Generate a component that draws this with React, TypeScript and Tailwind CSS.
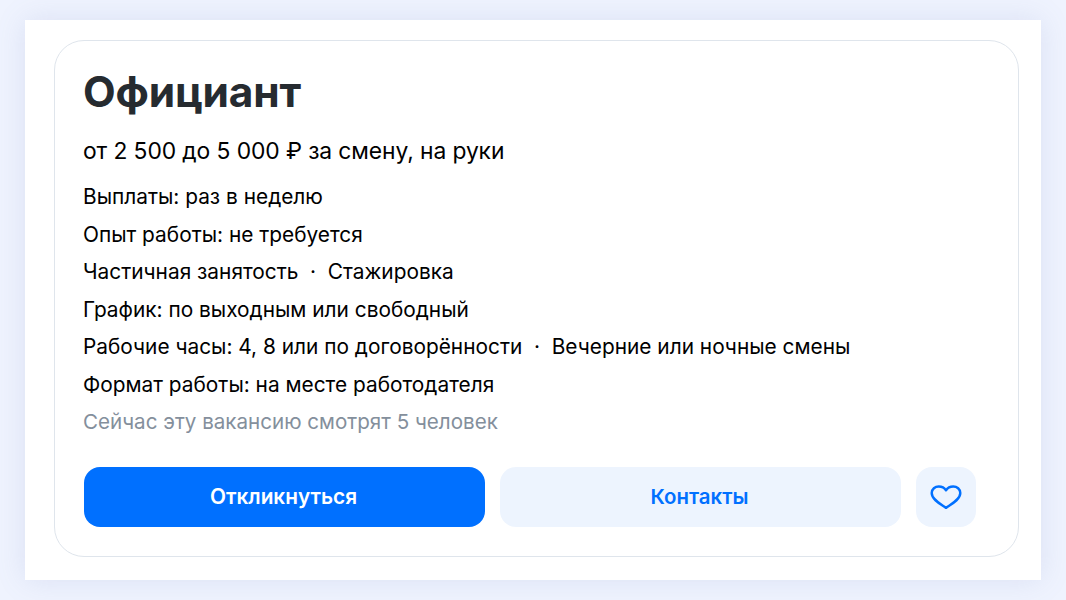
const ROWS = [
  "Выплаты: раз в неделю",
  "Опыт работы: не требуется",
  "Частичная занятость  ·  Стажировка",
  "График: по выходным или свободный",
  "Рабочие часы: 4, 8 или по договорённости  ·  Вечерние или ночные смены",
  "Формат работы: на месте работодателя",
];

function Heart() {
  return (
    <svg width="32" height="24" viewBox="0 0 30 22.5" fill="none" stroke="#0070ff" strokeWidth="2.3" strokeLinejoin="round">
      <path d="M15 21.5 C11 18.5 1.6 14 1.6 7.6 C1.6 3.8 4.8 1.4 8.2 1.4 C11 1.4 13.6 2.8 15 5 C16.4 2.8 19 1.4 21.8 1.4 C25.2 1.4 28.4 3.8 28.4 7.6 C28.4 14 19 18.5 15 21.5 Z" />
    </svg>
  );
}

export default function App() {
  return (
    <div className="h-[600px] w-[1066px] overflow-hidden bg-[#eff3fe] pl-[25px] pt-[20px] font-['Inter',sans-serif]">
      <div className="h-[560px] w-[1016px] bg-white pl-[29px] pt-[20px] shadow-[0_0_28px_rgba(110,130,185,0.16)]">
        <div className="h-[517px] w-[964.5px] rounded-[30px] border border-[#dfe5ec] pl-[29px] pr-[40px] pt-[22px]">
          <h1 className="-ml-px text-[42.4px] font-bold leading-[58px] tracking-[-0.15px] text-[#262b30]">Официант</h1>
          <p className="-ml-px mt-[15px] text-[22.85px] leading-[30px] tracking-[-0.1px] text-black">от 2 500 до 5 000 ₽ за смену, на руки</p>
          <ul className="-ml-px mt-[12.4px] text-[20.85px] leading-[37.5px] whitespace-pre text-black">
            {ROWS.map((r) => (
              <li key={r}>{r}</li>
            ))}
            <li className="text-[20.6px] text-[#848f9c]">Сейчас эту вакансию смотрят 5 человек</li>
          </ul>
          <div className="mt-[26.2px] flex gap-[15px]">
            <button className="h-[60px] w-[401px] rounded-[16px] bg-[#0070ff] pr-[2px] text-[20.8px] font-semibold text-white">Откликнуться</button>
            <button className="h-[60px] w-[401px] rounded-[16px] bg-[#edf4fe] pr-[2px] text-[20.4px] font-semibold text-[#0070ff]">Контакты</button>
            <button className="flex h-[60px] w-[60px] items-center justify-center rounded-[16px] bg-[#edf4fe] pr-[1px]"><Heart /></button>
          </div>
        </div>
      </div>
    </div>
  );
}
